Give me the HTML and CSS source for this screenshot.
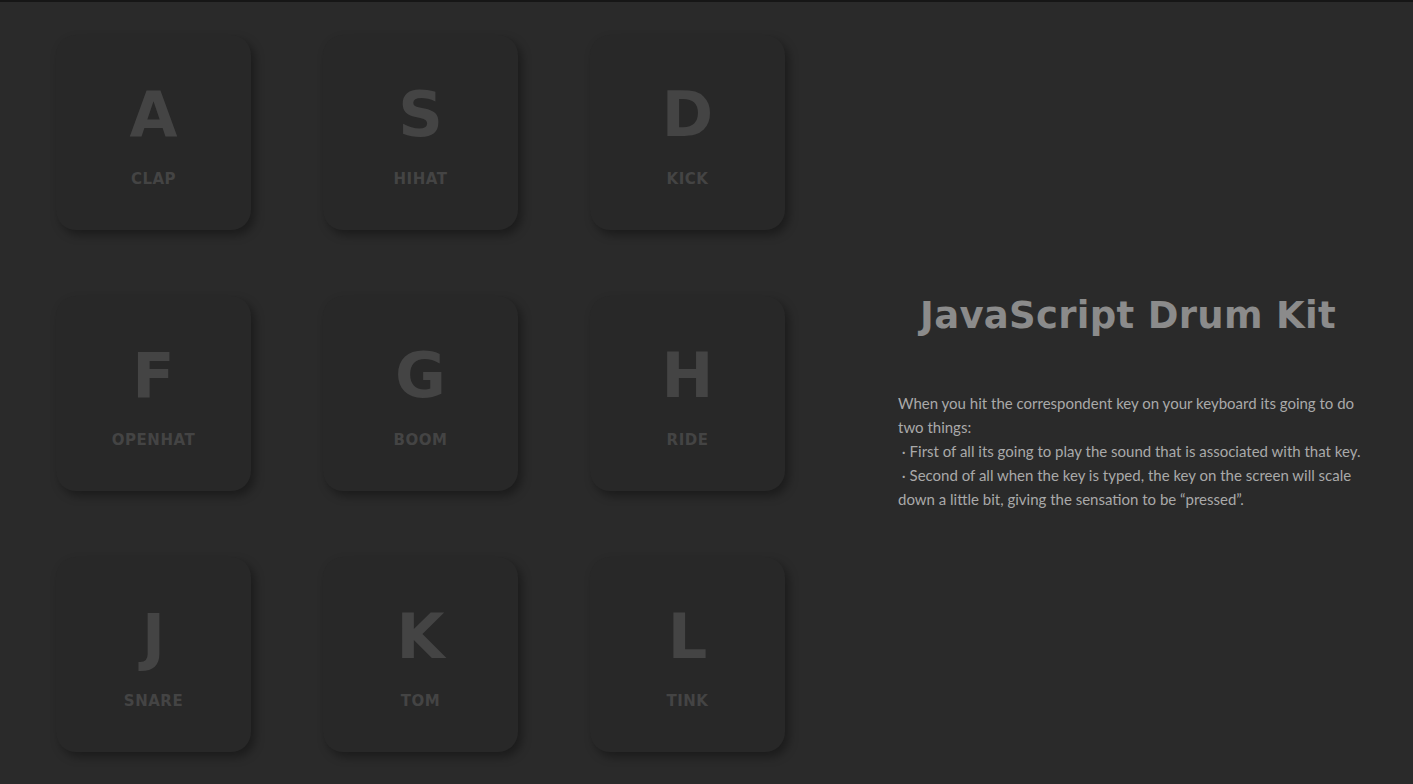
FILE: index.html
```html
<!DOCTYPE html>
<html lang="en">
<head>
<meta charset="utf-8">
<title>JavaScript Drum Kit</title>
<link rel="stylesheet" href="styles.css">
</head>
<body>
<main class="page">
  <section class="keys">
    <div class="key"><kbd>A</kbd><span class="sound">CLAP</span></div>
    <div class="key"><kbd>S</kbd><span class="sound">HIHAT</span></div>
    <div class="key"><kbd>D</kbd><span class="sound">KICK</span></div>
    <div class="key"><kbd>F</kbd><span class="sound">OPENHAT</span></div>
    <div class="key"><kbd>G</kbd><span class="sound">BOOM</span></div>
    <div class="key"><kbd>H</kbd><span class="sound">RIDE</span></div>
    <div class="key"><kbd>J</kbd><span class="sound">SNARE</span></div>
    <div class="key"><kbd>K</kbd><span class="sound">TOM</span></div>
    <div class="key"><kbd>L</kbd><span class="sound">TINK</span></div>
  </section>
  <section class="info">
    <h1 class="title">JavaScript Drum Kit</h1>
    <p class="desc">When you hit the correspondent key on your keyboard its going to do two things:<br>
    &nbsp;· First of all its going to play the sound that is associated with that key.<br>
    &nbsp;· Second of all when the key is typed, the key on the screen will scale down a little bit, giving the sensation to be “pressed”.</p>
  </section>
</main>
</body>
</html>
```

FILE: styles.css
```css
html, body {
  margin: 0;
  padding: 0;
  height: 100%;
}
body {
  background: #2a2a2a;
  border-top: 2px solid #161616;
  box-sizing: border-box;
  overflow: hidden;
}
.page {
  display: flex;
  align-items: flex-start;
  padding: 33px 0 0 56px;
}
.keys {
  display: grid;
  grid-template-columns: repeat(3, 195px);
  grid-auto-rows: 195px;
  column-gap: 72px;
  row-gap: 66px;
}
.key {
  background: #282828;
  border-radius: 20px;
  box-shadow: 4px 5px 10px rgba(0, 0, 0, 0.35);
  display: flex;
  flex-direction: column;
  align-items: center;
  justify-content: flex-start;
  padding-top: 44px;
  box-sizing: border-box;
  font-family: "DejaVu Sans", sans-serif;
  font-weight: bold;
  color: #444;
}
.key kbd {
  font-family: "DejaVu Sans", sans-serif;
  font-size: 62px;
  line-height: 72px;
  font-weight: bold;
}
.sound {
  margin-top: 18px;
  font-size: 15px;
  letter-spacing: 0.5px;
  line-height: 20px;
}
.info {
  margin-left: 113px;
  width: 460px;
  padding-top: 256px;
}
.title {
  margin: 0;
  text-align: center;
  font-family: "DejaVu Sans", sans-serif;
  font-weight: bold;
  font-size: 37px;
  line-height: 50px;
  color: #8b8b8b;
  letter-spacing: 0.3px;
}
.desc {
  margin: 50px -14px 0 0;
  font-family: Lato, sans-serif;
  font-size: 15px;
  line-height: 24px;
  color: #a9a9a9;
}
```
